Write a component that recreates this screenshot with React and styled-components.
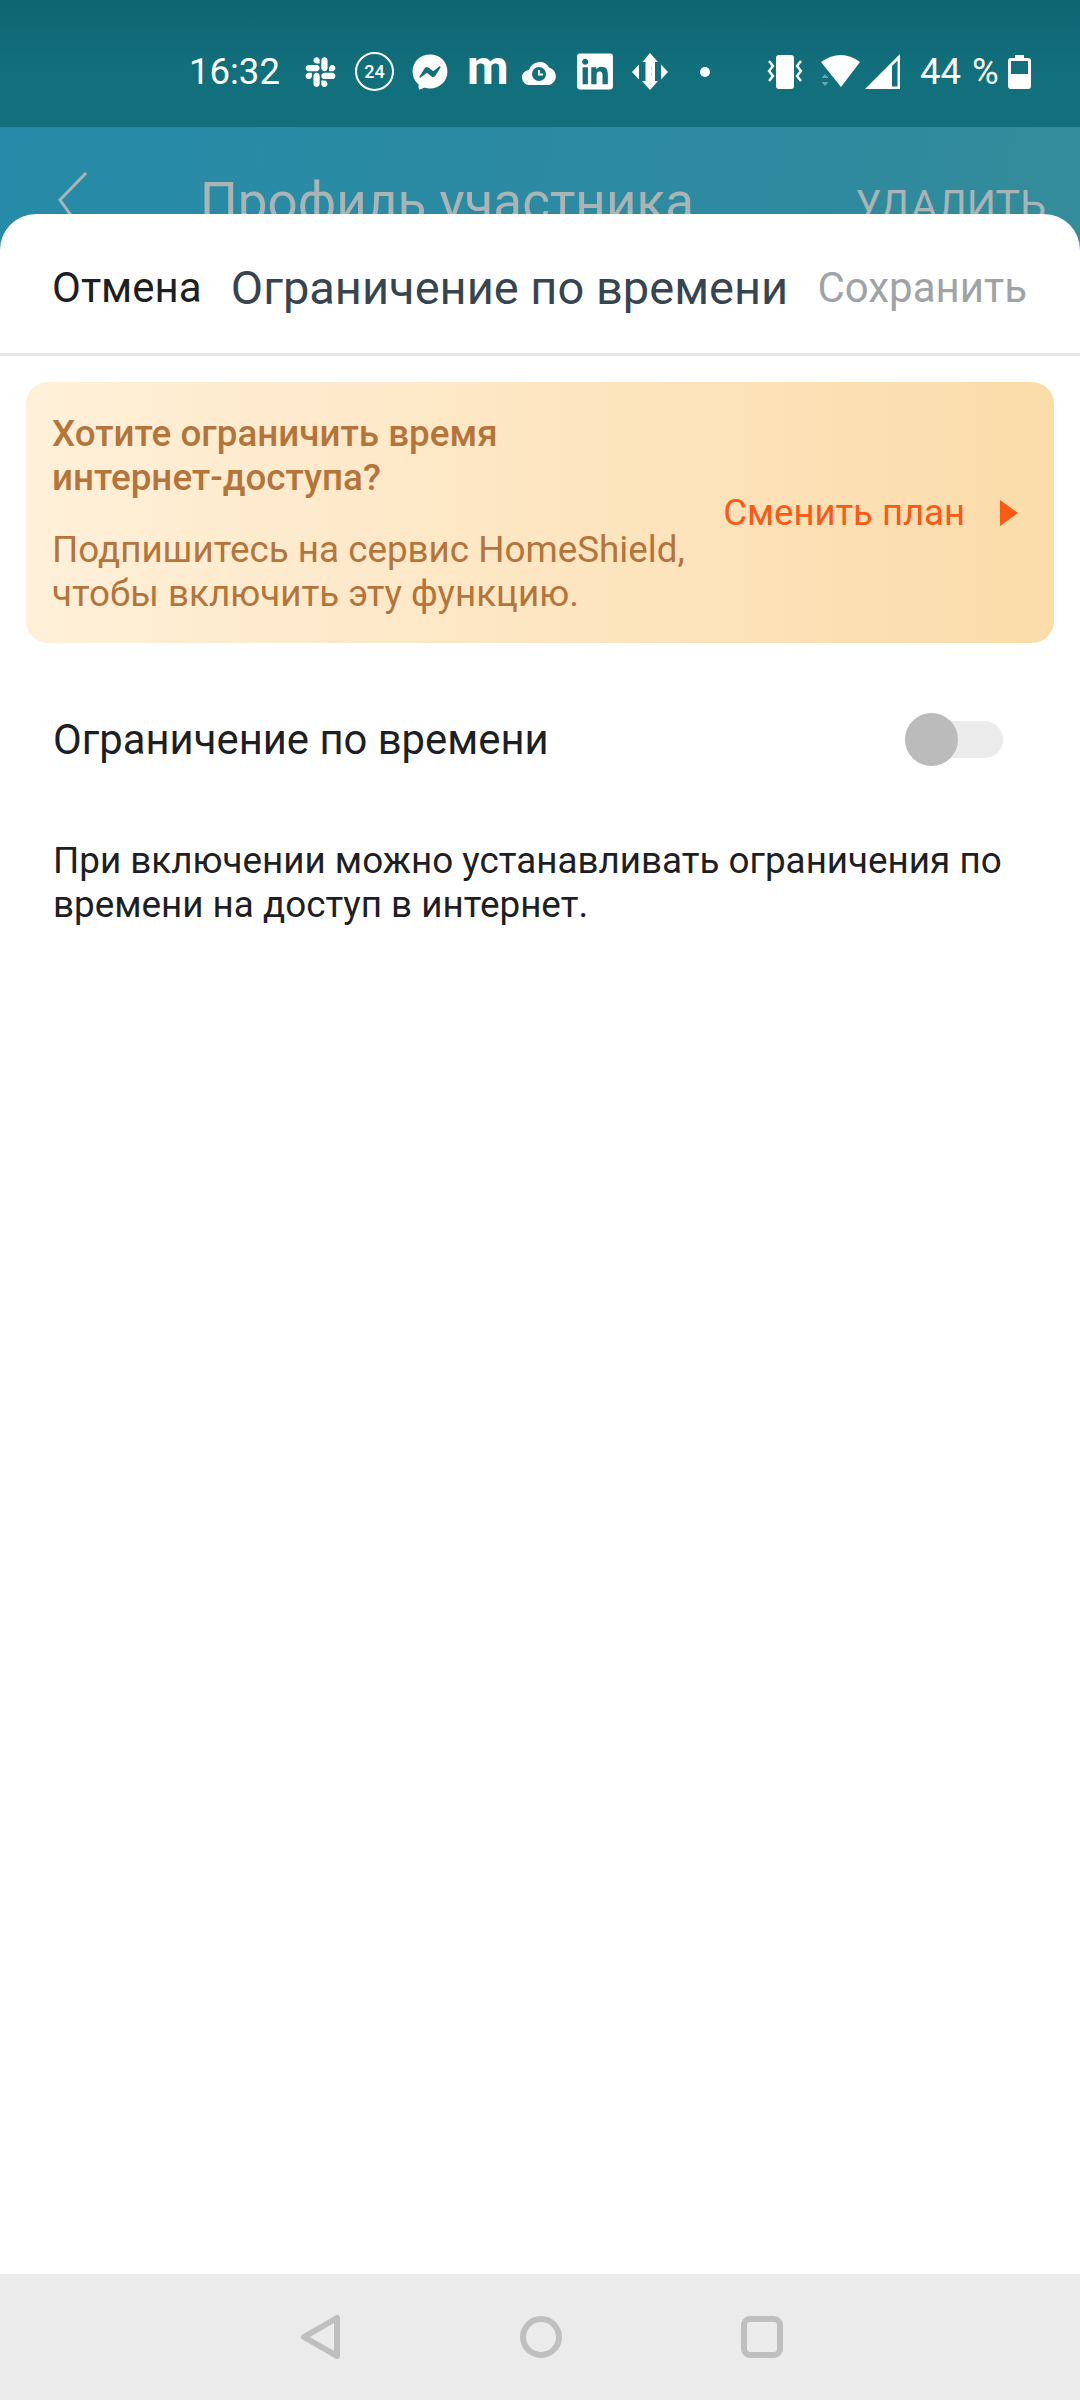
import styled, { createGlobalStyle } from "styled-components";
import { FaFacebookMessenger, FaLinkedin, FaSlack } from "react-icons/fa";

const GlobalStyle = createGlobalStyle`
  html, body {
    margin: 0;
    padding: 0;
    background: #fff;
  }
  #root {
    width: 1080px;
    height: 2400px;
  }
`;

const Screen = styled.div`
  width: 1080px;
  height: 2400px;
  display: flex;
  flex-direction: column;
  overflow: hidden;
  font-family: Roboto, "Noto Sans", sans-serif;
`;

const StatusBar = styled.div`
  height: 127px;
  flex: none;
  display: flex;
  align-items: center;
  box-sizing: border-box;
  padding: 16px 0 0 189px;
  background: linear-gradient(180deg, #0f6572 0%, #12707d 60%, #12707d 100%);
  color: #fff;
`;

const StatusText = styled.span`
  font-size: 36.5px;
  line-height: 40px;
  margin-left: ${(p) => p.$left || 0}px;
  white-space: nowrap;
`;

const BatteryText = styled(StatusText)`
  word-spacing: 2px;
`;

const IconSlot = styled.span`
  display: flex;
  align-items: center;
  justify-content: center;
  flex: none;
  width: ${(p) => p.$w}px;
  margin-left: ${(p) => p.$left}px;
  color: #fff;
`;

const Badge24 = styled.span`
  width: 39px;
  height: 39px;
  box-sizing: border-box;
  border: 2px solid #fff;
  border-radius: 50%;
  display: flex;
  align-items: center;
  justify-content: center;
  font-size: 18px;
  font-weight: 500;
  margin-left: 18px;
  flex: none;
`;

const MediumM = styled.span`
  font-size: 48px;
  line-height: 40px;
  font-weight: 700;
  width: 36px;
  margin-left: 19px;
  margin-top: -8px;
  text-align: center;
  flex: none;
`;

const Dot = styled.span`
  width: 10px;
  height: 10px;
  border-radius: 50%;
  background: #fff;
  margin-left: 32px;
  flex: none;
`;

const Backdrop = styled.div`
  flex: 1;
  display: flex;
  flex-direction: column;
  min-height: 0;
  background: linear-gradient(100deg, #268ba8 0%, #2f8a9f 60%, #3a9090 100%);
`;

const TopBar = styled.div`
  height: 87px;
  flex: none;
  overflow: hidden;
  display: flex;
  align-items: flex-start;
  color: #aab4b5;
`;

const BackChevron = styled.svg`
  width: 34px;
  height: 60px;
  margin: 45px 0 0 56px;
  flex: none;
`;

const TopTitle = styled.span`
  font-size: 53px;
  line-height: 60px;
  margin: 45px 0 0 110px;
  white-space: nowrap;
`;

const TopAction = styled.span`
  font-size: 41px;
  line-height: 56px;
  margin: 50px 34px 0 auto;
  white-space: nowrap;
`;

const Sheet = styled.div`
  flex: 1;
  min-height: 0;
  background: #fff;
  border-radius: 36px 36px 0 0;
  display: flex;
  flex-direction: column;
`;

const SheetHeader = styled.div`
  height: 142px;
  flex: none;
  box-sizing: border-box;
  display: flex;
  align-items: center;
  padding: 7px 53px 0 52px;
  border-bottom: 3px solid #e6e6e6;
`;

const HeaderButton = styled.span`
  font-size: 42px;
  color: ${(p) => (p.$muted ? "#a0a3a6" : "#1d2023")};
  white-space: nowrap;
`;

const SheetTitle = styled.span`
  flex: 1;
  text-align: center;
  font-size: 47px;
  color: #36454f;
  white-space: nowrap;
`;

const Banner = styled.div`
  margin: 26px 26px 0;
  height: 261px;
  box-sizing: border-box;
  padding: 0 36px 0 26px;
  border-radius: 22px;
  display: flex;
  align-items: center;
  justify-content: space-between;
  background: linear-gradient(90deg, #fff0d9 0%, #fbdcaa 100%);
`;

const BannerText = styled.div`
  color: #b4743a;
  font-size: 36.8px;
  line-height: 44px;
  padding-top: 3px;
`;

const BannerTitle = styled.div`
  font-weight: 500;
  margin-bottom: 28px;
`;

const PlanLink = styled.div`
  display: flex;
  align-items: center;
  gap: 35px;
  color: #fa5a14;
  font-size: 36.5px;
  white-space: nowrap;
`;

const PlanArrow = styled.span`
  width: 0;
  height: 0;
  border-style: solid;
  border-width: 13px 0 13px 18px;
  border-color: transparent transparent transparent #fa5a14;
`;

const ToggleRow = styled.div`
  display: flex;
  align-items: center;
  justify-content: space-between;
  margin-top: 66px;
  padding: 0 77px 0 53px;
  height: 60px;
`;

const RowLabel = styled.span`
  font-size: 41.8px;
  color: #1d2023;
`;

const ToggleTrack = styled.div`
  position: relative;
  width: 98px;
  height: 37px;
  border-radius: 19px;
  background: #ebebeb;
`;

const ToggleKnob = styled.span`
  position: absolute;
  left: 0;
  top: -8px;
  width: 53px;
  height: 53px;
  border-radius: 50%;
  background: #bbbbbb;
`;

const Description = styled.p`
  margin: 70px 40px 0 53px;
  font-size: 36.8px;
  line-height: 44px;
  color: #1d2023;
`;

const NavBar = styled.div`
  height: 126px;
  flex: none;
  background: #ebebeb;
  display: flex;
  align-items: center;
  padding-left: 297px;
  gap: 175px;
`;

const NavIcon = styled.svg`
  width: 46px;
  height: 46px;
  flex: none;
  fill: none;
  stroke: #bfbfbf;
  stroke-width: 6;
  stroke-linejoin: round;
`;

function CloudClock() {
  return (
    <svg width="36" height="28" viewBox="0 0 36 28">
      <path
        fill="#fff"
        d="M8 27a7.5 7.5 0 0 1-1-15A11 11 0 0 1 27 9.5 9 9 0 0 1 27 27z"
      />
      <circle cx="17" cy="16" r="7" fill="#12707d" />
      <path d="M17 12v4.5h4" fill="none" stroke="#fff" strokeWidth="1.8" />
    </svg>
  );
}

function MoveIcon() {
  return (
    <svg width="36" height="37" viewBox="0 0 36 37" fill="#fff">
      <path d="M18 0l8 9h-3v5h-3.5v3h-3v-3H13.500V9h-3z" />
      <path d="M18 37l-8-9h3.500v-5H17v-3h2.500v3H23v5h3z" />
      <path d="M13.500 14H17v9h-3.500zM19.500 14H23v9h-3.500zM13.500 17H23v3h-9.500z" />
      <path d="M0 19l7-7.500v15z" />
      <path d="M36 19l-7-7.500v15z" />
    </svg>
  );
}

function VibrateIcon() {
  return (
    <svg width="36" height="34" viewBox="0 0 36 34">
      <rect x="9" y="0" width="18" height="34" rx="3" fill="#fff" />
      <path
        d="M2 6l4 5-4 5 4 5-4 5M34 6l-4 5 4 5-4 5 4 5"
        fill="none"
        stroke="#fff"
        strokeWidth="2.4"
      />
    </svg>
  );
}

function WifiIcon() {
  return (
    <svg width="40" height="33" viewBox="0 0 40 33" fill="#fff">
      <path d="M0 7Q20-7 39 7L20 32z" />
      <path d="M4 19l-3.500 4h7zM4 31l-3.500-4h7z" fill="#6aa6ae" />
    </svg>
  );
}

function SignalIcon() {
  return (
    <svg width="35" height="35" viewBox="0 0 35 35">
      <path d="M0 35L35 0v35z" fill="#fff" />
      <path d="M27 32.500V12l5.500-5.500v26z" fill="#12707d" />
    </svg>
  );
}

function BatteryIcon() {
  return (
    <svg width="23" height="34" viewBox="0 0 23 34">
      <path
        d="M7 0h9v3h4a3 3 0 0 1 3 3v25a3 3 0 0 1-3 3H3a3 3 0 0 1-3-3V6a3 3 0 0 1 3-3h4z"
        fill="#fff"
      />
      <rect x="3" y="6" width="17" height="13" fill="#12707d" />
    </svg>
  );
}

function App() {
  return (
    <Screen>
      <GlobalStyle />
      <StatusBar>
        <StatusText>16:32</StatusText>
        <IconSlot $w={33} $left={24}>
          <FaSlack size={34} />
        </IconSlot>
        <Badge24>24</Badge24>
        <IconSlot $w={36} $left={18}>
          <FaFacebookMessenger size={36} />
        </IconSlot>
        <MediumM>m</MediumM>
        <IconSlot $w={36} $left={19}>
          <CloudClock />
        </IconSlot>
        <IconSlot $w={36} $left={19}>
          <FaLinkedin size={41} />
        </IconSlot>
        <IconSlot $w={36} $left={19}>
          <MoveIcon />
        </IconSlot>
        <Dot />
        <IconSlot $w={36} $left={57}>
          <VibrateIcon />
        </IconSlot>
        <IconSlot $w={40} $left={18}>
          <WifiIcon />
        </IconSlot>
        <IconSlot $w={35} $left={4}>
          <SignalIcon />
        </IconSlot>
        <BatteryText $left={20}>44 %</BatteryText>
        <IconSlot $w={23} $left={9}>
          <BatteryIcon />
        </IconSlot>
      </StatusBar>

      <Backdrop>
        <TopBar>
          <BackChevron viewBox="0 0 34 60">
            <path d="M30 1L4 28l20 28" fill="none" stroke="#aab4b5" strokeWidth="3" />
          </BackChevron>
          <TopTitle>Профиль участника</TopTitle>
          <TopAction>УДАЛИТЬ</TopAction>
        </TopBar>

        <Sheet>
          <SheetHeader>
            <HeaderButton>Отмена</HeaderButton>
            <SheetTitle>Ограничение по времени</SheetTitle>
            <HeaderButton $muted>Сохранить</HeaderButton>
          </SheetHeader>

          <Banner>
            <BannerText>
              <BannerTitle>
                Хотите ограничить время
                <br />
                интернет-доступа?
              </BannerTitle>
              Подпишитесь на сервис HomeShield,
              <br />
              чтобы включить эту функцию.
            </BannerText>
            <PlanLink>
              Сменить план
              <PlanArrow />
            </PlanLink>
          </Banner>

          <ToggleRow>
            <RowLabel>Ограничение по времени</RowLabel>
            <ToggleTrack>
              <ToggleKnob />
            </ToggleTrack>
          </ToggleRow>

          <Description>
            При включении можно устанавливать ограничения по времени на доступ в
            интернет.
          </Description>
        </Sheet>
      </Backdrop>

      <NavBar>
        <NavIcon viewBox="0 0 46 46">
          <path d="M7 23L40 4v38z" />
        </NavIcon>
        <NavIcon viewBox="0 0 46 46">
          <circle cx="23" cy="23" r="18" />
        </NavIcon>
        <NavIcon viewBox="0 0 46 46">
          <rect x="5" y="5" width="36" height="36" rx="6" />
        </NavIcon>
      </NavBar>
    </Screen>
  );
}

export default App;
